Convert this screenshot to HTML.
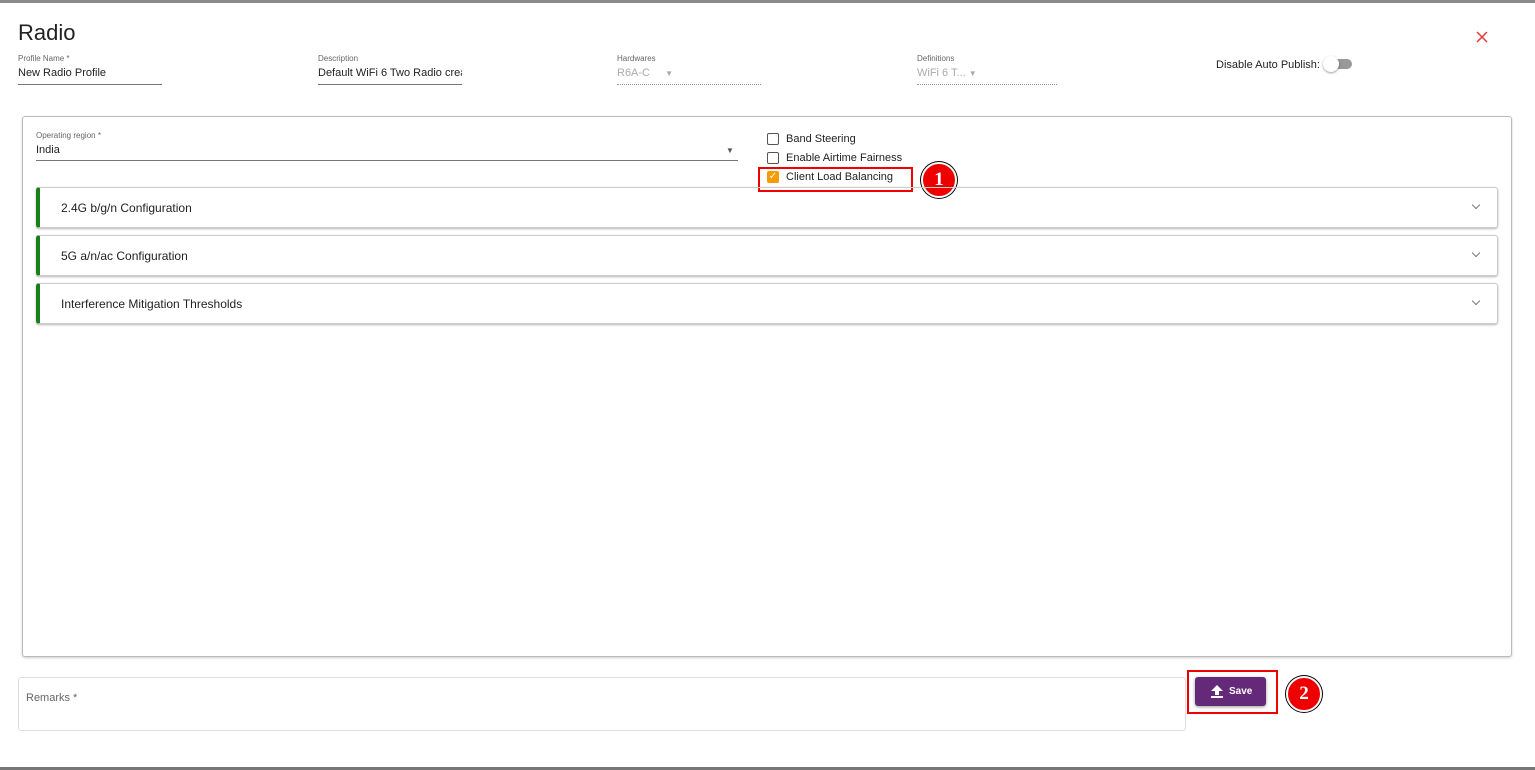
<!DOCTYPE html>
<html><head><style>
*{box-sizing:border-box;margin:0;padding:0}
body{width:1535px;height:770px;background:#fff;font-family:"Liberation Sans",sans-serif;position:relative;overflow:hidden;color:#222}
.a{position:absolute}
.lbl{font-size:8px;color:#666}
.val{font-size:11px;color:#222}
.ul{border-bottom:1px solid #777}
.dot{border-bottom:1px dotted #999}
.cb{width:12px;height:12px;border:1px solid #555;border-radius:2px;background:#fff}
.txt{font-size:11px;color:#222}
.acc{left:36px;width:1462px;height:41px;border:1px solid #ccc;border-left:4px solid #1a7f1a;border-radius:3px;box-shadow:0 1px 2px rgba(0,0,0,.3)}
.acc span{position:absolute;left:21px;top:13px;font-size:12px;color:#222}
.acc i{position:absolute;right:18px;top:14px;width:6px;height:6px;border-right:1px solid #777;border-bottom:1px solid #777;transform:rotate(45deg)}
.badge{width:36px;height:36px;border-radius:50%;background:#e00;border:2px solid #fff;box-shadow:0 0 0 1px #000;color:#fff;font-weight:bold;font-size:19px;text-align:center;line-height:32px;font-family:"Liberation Serif",serif}
</style></head><body>
<div class="a" style="left:0;top:0;width:1535px;height:3px;background:#8a8a8a"></div>
<div class="a" style="left:0;top:767px;width:1535px;height:3px;background:#777"></div>
<div class="a" style="left:18px;top:20px;font-size:22px;color:#222">Radio</div>
<svg class="a" style="left:1476px;top:31px" width="12" height="12" viewBox="0 0 12 12"><path d="M1 1L11 11M11 1L1 11" stroke="#e53935" stroke-width="1.5"/></svg>

<div class="a lbl" style="left:18px;top:54px">Profile Name *</div>
<div class="a val ul" style="left:18px;top:67px;width:144px;height:18px">New Radio Profile</div>
<div class="a lbl" style="left:318px;top:54px">Description</div>
<div class="a val ul" style="left:318px;top:67px;width:144px;height:18px;overflow:hidden;white-space:nowrap">Default WiFi 6 Two Radio crea</div>
<div class="a lbl" style="left:617px;top:54px">Hardwares</div>
<div class="a val dot" style="left:617px;top:67px;width:144px;height:18px;color:#aaa">R6A-C <span style="font-size:8px;margin-left:12px">▼</span></div>
<div class="a lbl" style="left:917px;top:54px">Definitions</div>
<div class="a val dot" style="left:917px;top:67px;width:140px;height:18px;color:#aaa">WiFi 6 T... <span style="font-size:8px">▼</span></div>
<div class="a val" style="left:1216px;top:59px">Disable Auto Publish:</div>
<div class="a" style="left:1326px;top:59px;width:26px;height:10px;border-radius:5px;background:#999"></div>
<div class="a" style="left:1323px;top:56px;width:16px;height:16px;border-radius:50%;background:#fff;box-shadow:0 1px 2px rgba(0,0,0,.4)"></div>

<div class="a" style="left:22px;top:116px;width:1490px;height:541px;border:1px solid #bbb;border-radius:3px;box-shadow:0 1px 2px rgba(0,0,0,.2)"></div>
<div class="a lbl" style="left:36px;top:131px">Operating region *</div>
<div class="a val ul" style="left:36px;top:144px;width:702px;height:17px">India</div>
<div class="a" style="left:726px;top:146px;font-size:8px;color:#555">▼</div>

<div class="a cb" style="left:767px;top:133px"></div><div class="a txt" style="left:786px;top:133px">Band Steering</div>
<div class="a cb" style="left:767px;top:152px"></div><div class="a txt" style="left:786px;top:152px">Enable Airtime Fairness</div>
<div class="a cb" style="left:767px;top:171px;background:#f59c00;border-color:#f59c00;color:#fff;font-size:10px;line-height:10px;text-align:center">✓</div><div class="a txt" style="left:786px;top:171px">Client Load Balancing</div>
<div class="a" style="left:758px;top:167px;width:155px;height:25px;border:2px solid #e00"></div>
<div class="a badge" style="left:921px;top:162px">1</div>

<div class="a acc" style="top:187px"><span>2.4G b/g/n Configuration</span><i></i></div>
<div class="a acc" style="top:235px"><span>5G a/n/ac Configuration</span><i></i></div>
<div class="a acc" style="top:283px"><span>Interference Mitigation Thresholds</span><i></i></div>

<div class="a" style="left:18px;top:677px;width:1168px;height:54px;border:1px solid #ddd;border-radius:3px"></div>
<div class="a" style="left:26px;top:692px;font-size:11px;color:#666">Remarks *</div>
<div class="a" style="left:1187px;top:670px;width:91px;height:44px;border:2px solid #e00"></div>
<div class="a" style="left:1195px;top:677px;width:71px;height:29px;background:#65297a;border-radius:3px;box-shadow:0 1px 3px rgba(0,0,0,.4);color:#fff;font-size:10px;font-weight:bold;line-height:29px">
<svg class="a" style="left:15px;top:8px" width="14" height="13" viewBox="0 0 14 13"><path d="M7 0L1 6h4v4h4V6h4z M1 11h12v2H1z" fill="#fff"/></svg>
<span class="a" style="left:34px;top:0">Save</span></div>
<div class="a badge" style="left:1286px;top:676px">2</div>
</body></html>
